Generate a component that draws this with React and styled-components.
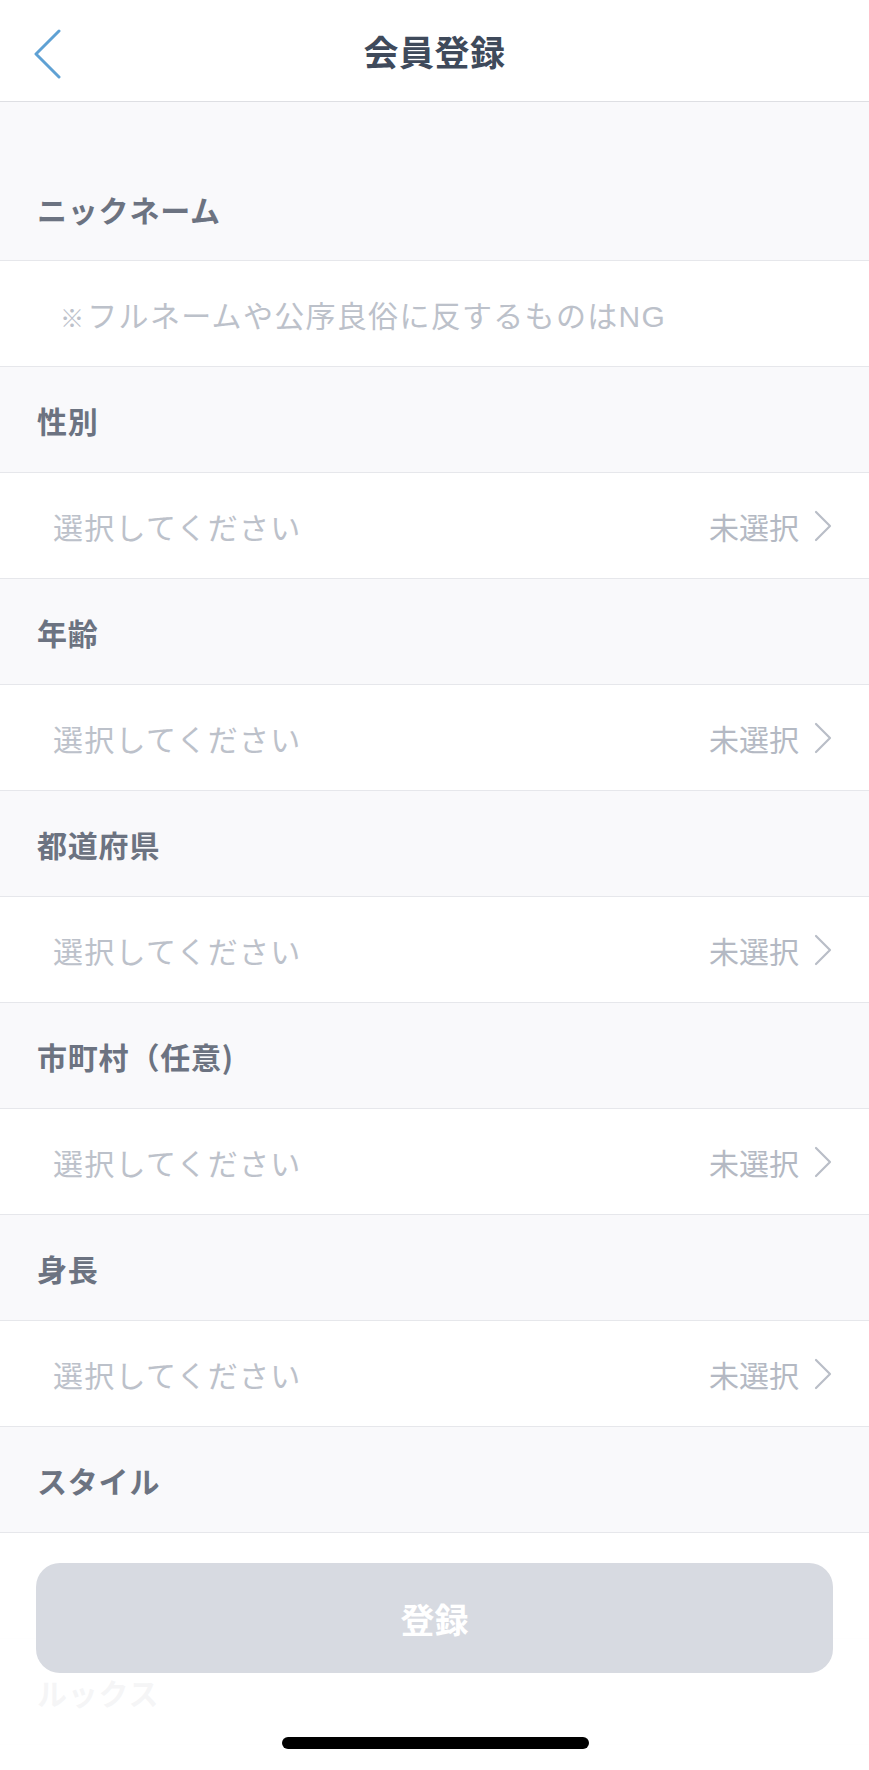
import React from "react";
import styled, { createGlobalStyle } from "styled-components";

const GlobalStyle = createGlobalStyle`
  html, body {
    margin: 0;
    padding: 0;
    background: #ffffff;
    font-family: "Noto Sans CJK JP", "Noto Sans", sans-serif;
  }
  * { box-sizing: border-box; }
`;

const Page = styled.div`
  position: relative;
  min-height: 100vh;
  background: #ffffff;
`;

const Header = styled.header`
  position: relative;
  height: 102px;
  display: flex;
  align-items: center;
  justify-content: center;
  border-bottom: 1px solid #dedfe3;
  background: #ffffff;
`;

const BackButton = styled.button`
  position: absolute;
  left: 32px;
  top: 28px;
  width: 36px;
  height: 52px;
  padding: 0;
  border: none;
  background: transparent;
  display: flex;
  align-items: center;
  justify-content: flex-start;
`;

const Title = styled.h1`
  margin: 0;
  font-size: 35px;
  font-weight: 700;
  color: #3f4a5b;
  letter-spacing: 0.5px;
`;

const List = styled.div`
  display: flex;
  flex-direction: column;
`;

const LabelRow = styled.div`
  height: ${(props) => (props.first ? "159px" : "106px")};
  padding: ${(props) => (props.first ? "56px 37px 0" : "0 37px")};
  display: flex;
  align-items: center;
  background: #f9f9fb;
  border-bottom: 1px solid #e6e7eb;
`;

const Label = styled.span`
  font-size: 30px;
  font-weight: 700;
  color: #6c7381;
  letter-spacing: 0.8px;
`;

const InputRow = styled.div`
  height: 106px;
  padding: 0 36px 0 ${(props) => props.indent || "53px"};
  display: flex;
  align-items: center;
  justify-content: space-between;
  background: #ffffff;
  border-bottom: 1px solid #e6e7eb;
`;

const Placeholder = styled.span`
  font-size: 30px;
  font-weight: 400;
  color: #bcc1ca;
  letter-spacing: 1.3px;
  font-family: ${(props) =>
    props.latin
      ? '"Liberation Sans", "Noto Sans CJK JP", sans-serif'
      : '"Noto Sans CJK JP", sans-serif'};
`;

const Note = styled.span`
  font-size: 24px;
  margin-right: 2px;
`;

const Value = styled.span`
  display: flex;
  align-items: center;
  gap: 14px;
  font-size: 30px;
  color: #b4b9c3;
`;

const Footer = styled.div`
  position: fixed;
  left: 0;
  right: 0;
  bottom: 0;
  height: 237px;
  padding: 30px 36px 0;
  background: rgba(255, 255, 255, 0.93);
`;

const SubmitButton = styled.button`
  width: 100%;
  height: 110px;
  border: none;
  border-radius: 24px;
  background: #d7dae1;
  color: #ffffff;
  font-family: "Noto Sans CJK JP", sans-serif;
  font-size: 34px;
  font-weight: 700;
`;

const HomeIndicator = styled.div`
  position: absolute;
  left: 50%;
  bottom: 21px;
  width: 307px;
  height: 12px;
  margin-left: -153px;
  border-radius: 6px;
  background: #000000;
`;

const Chevron = () => (
  <svg width="20" height="32" viewBox="0 0 20 32" fill="none">
    <polyline
      points="3,2 17,16 3,30"
      stroke="#b9bec7"
      strokeWidth="2.2"
      strokeLinecap="round"
      strokeLinejoin="round"
    />
  </svg>
);

const BackIcon = () => (
  <svg width="30" height="50" viewBox="0 0 30 50" fill="none">
    <polyline
      points="27,2 4,25 27,48"
      stroke="#5fa1d4"
      strokeWidth="3"
      strokeLinecap="round"
      strokeLinejoin="round"
    />
  </svg>
);

const selects = ["性別", "年齢", "都道府県", "市町村（任意)", "身長", "スタイル"];

const App = () => {
  return (
    <Page>
      <GlobalStyle />
      <Header>
        <BackButton>
          <BackIcon />
        </BackButton>
        <Title>会員登録</Title>
      </Header>
      <List>
        <LabelRow first>
          <Label>ニックネーム</Label>
        </LabelRow>
        <InputRow indent="60px">
          <Placeholder latin>
            <Note>※</Note>フルネームや公序良俗に反するものはNG
          </Placeholder>
        </InputRow>
        {selects.map((name) => (
          <React.Fragment key={name}>
            <LabelRow>
              <Label>{name}</Label>
            </LabelRow>
            <InputRow>
              <Placeholder>選択してください</Placeholder>
              <Value>
                未選択
                <Chevron />
              </Value>
            </InputRow>
          </React.Fragment>
        ))}
        <LabelRow>
          <Label>ルックス</Label>
        </LabelRow>
      </List>
      <Footer>
        <SubmitButton>登録</SubmitButton>
        <HomeIndicator />
      </Footer>
    </Page>
  );
};

export default App;
